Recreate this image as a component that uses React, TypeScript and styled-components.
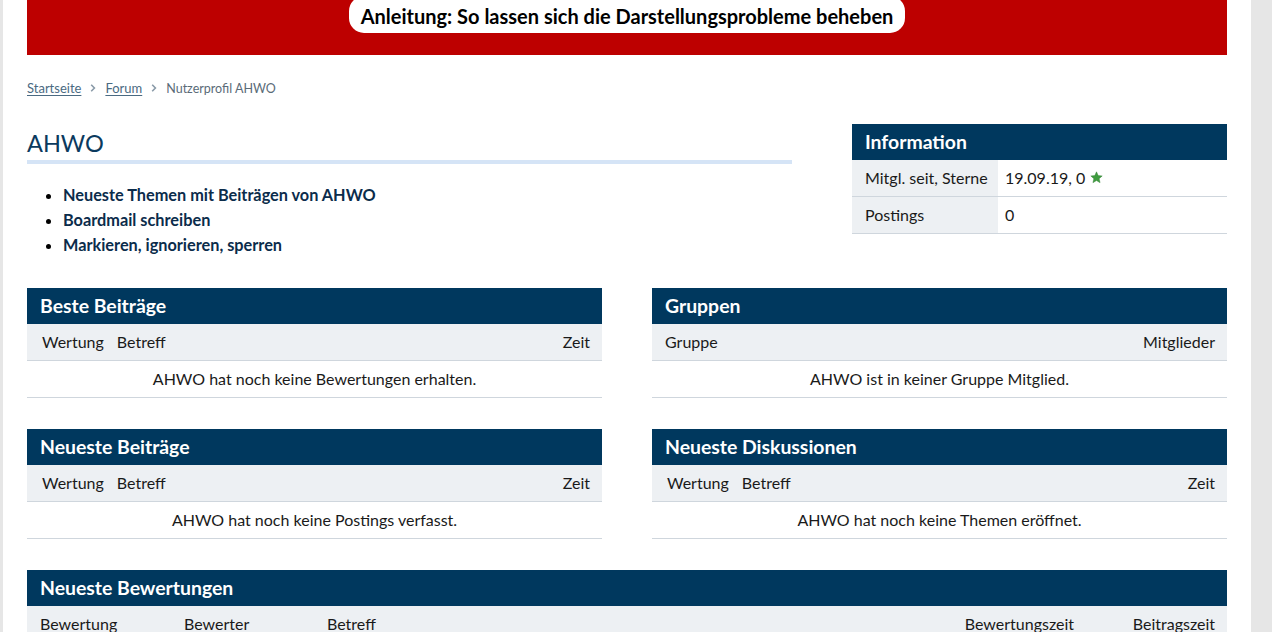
import React from "react";
import styled, { createGlobalStyle } from "styled-components";

const GlobalStyle = createGlobalStyle`
    html, body {
        margin: 0;
        padding: 0;
        background: #e6e6e6;
    }
    body {
        font-family: Lato, "Noto Sans", "Liberation Sans", sans-serif;
        font-size: 16px;
        color: #1a1a1a;
    }
`;

const NAVY = "#00385e";
const SUB_BG = "#edf0f3";
const LINE = "#cfd6dd";

interface Column {
    label: string;
    align?: "left" | "right";
}

interface Section {
    title: string;
    columns: Column[];
    template: string;
    empty?: string;
    padLeft?: number;
    gap?: number;
}

const sections: Section[] = [
    {
        title: "Beste Beiträge",
        columns: [{ label: "Wertung" }, { label: "Betreff" }, { label: "Zeit", align: "right" }],
        template: "auto 1fr auto",
        empty: "AHWO hat noch keine Bewertungen erhalten.",
        padLeft: 15,
    },
    {
        title: "Gruppen",
        columns: [{ label: "Gruppe" }, { label: "Mitglieder", align: "right" }],
        template: "1fr auto",
        empty: "AHWO ist in keiner Gruppe Mitglied.",
        padLeft: 13,
    },
    {
        title: "Neueste Beiträge",
        columns: [{ label: "Wertung" }, { label: "Betreff" }, { label: "Zeit", align: "right" }],
        template: "auto 1fr auto",
        empty: "AHWO hat noch keine Postings verfasst.",
        padLeft: 15,
    },
    {
        title: "Neueste Diskussionen",
        columns: [{ label: "Wertung" }, { label: "Betreff" }, { label: "Zeit", align: "right" }],
        template: "auto 1fr auto",
        empty: "AHWO hat noch keine Themen eröffnet.",
        padLeft: 15,
    },
];

const ratings: Section = {
    title: "Neueste Bewertungen",
    columns: [
        { label: "Bewertung" },
        { label: "Bewerter" },
        { label: "Betreff" },
        { label: "Bewertungszeit" },
        { label: "Beitragszeit", align: "right" },
    ],
    template: "144px 143px 1fr 168px auto",
    padLeft: 13,
    gap: 0,
};

const Chevron = () => (
    <svg viewBox="0 0 6 8" width="6" height="8">
        <path d="M1.2 0.8 L4.4 4 L1.2 7.2" fill="none" stroke="#8a9aa8" strokeWidth="1.6" />
    </svg>
);

const Star = () => (
    <StarIcon viewBox="0 0 24 24" width="13" height="13">
        <path
            d="M12 1.5l3.1 6.9 7.4.7-5.6 5 1.7 7.4L12 17.7l-6.6 3.8 1.7-7.4-5.6-5 7.4-.7z"
            fill="#3f9c3f"
            stroke="#2e7d32"
            strokeWidth="0.8"
        />
    </StarIcon>
);

const DataTable = ({ section, empty }: { section: Section; empty?: string }) => (
    <Table>
        <TableHead>{section.title}</TableHead>
        <HeadRow $template={section.template} $padLeft={section.padLeft ?? 13} $gap={section.gap ?? 13}>
            {section.columns.map((c) => (
                <HeadCell key={c.label} $align={c.align ?? "left"}>
                    {c.label}
                </HeadCell>
            ))}
        </HeadRow>
        {empty && <EmptyRow>{empty}</EmptyRow>}
    </Table>
);

export default function App() {
    return (
        <>
            <GlobalStyle />
            <Page>
                <Banner>
                    <BannerPill href="#">Anleitung: So lassen sich die Darstellungsprobleme beheben</BannerPill>
                </Banner>

                <Breadcrumb>
                    <Crumb href="#">Startseite</Crumb>
                    <Chevron />
                    <Crumb href="#">Forum</Crumb>
                    <Chevron />
                    <CurrentCrumb>Nutzerprofil AHWO</CurrentCrumb>
                </Breadcrumb>

                <TopRow>
                    <ProfileCol>
                        <Title>AHWO</Title>
                        <LinkList>
                            <li>
                                <ProfileLink href="#">Neueste Themen mit Beiträgen von AHWO</ProfileLink>
                            </li>
                            <li>
                                <ProfileLink href="#">Boardmail schreiben</ProfileLink>
                            </li>
                            <li>
                                <ProfileLink href="#">Markieren, ignorieren, sperren</ProfileLink>
                            </li>
                        </LinkList>
                    </ProfileCol>

                    <InfoBox>
                        <TableHead>Information</TableHead>
                        <InfoRow>
                            <InfoLabel>Mitgl. seit, Sterne</InfoLabel>
                            <InfoValue>
                                19.09.19, 0 <Star />
                            </InfoValue>
                        </InfoRow>
                        <InfoRow>
                            <InfoLabel>Postings</InfoLabel>
                            <InfoValue>0</InfoValue>
                        </InfoRow>
                    </InfoBox>
                </TopRow>

                <TableGrid>
                    {sections.map((s) => (
                        <DataTable key={s.title} section={s} empty={s.empty} />
                    ))}
                </TableGrid>

                <WideTable>
                    <DataTable section={ratings} />
                </WideTable>
            </Page>
        </>
    );
}

const Page = styled.div`
    margin-left: 3px;
    width: 1248px;
    min-height: 632px;
    box-sizing: border-box;
    padding: 0 24px 40px;
    background: #fff;
`;

const Banner = styled.div`
    height: 55px;
    background: #bd0000;
    display: flex;
    justify-content: center;
    align-items: flex-start;
    overflow: hidden;
`;

const BannerPill = styled.a`
    margin-top: -4px;
    height: 37px;
    line-height: 41px;
    padding: 0 12px;
    border-radius: 15px;
    background: #fff;
    color: #000;
    font-size: 20px;
    font-weight: 700;
    text-decoration: none;
    white-space: nowrap;
`;

const Breadcrumb = styled.nav`
    margin-top: 23px;
    height: 20px;
    display: flex;
    align-items: center;
    gap: 9px;
    font-size: 13px;
`;

const Crumb = styled.a`
    color: #4a6a82;
    text-decoration: underline;
    text-underline-offset: 2px;
`;

const CurrentCrumb = styled.span`
    color: #5a6b78;
    font-size: 12.5px;
`;

const TopRow = styled.div`
    margin-top: 26px;
    display: flex;
    gap: 60px;
    align-items: flex-start;
`;

const ProfileCol = styled.div`
    flex: 1;
`;

const Title = styled.h1`
    margin: 0;
    height: 36px;
    line-height: 38px;
    font-size: 23.5px;
    font-weight: 400;
    color: #0b3a5e;
    border-bottom: 4px solid #d5e4f6;
`;

const LinkList = styled.ul`
    margin: 18px 0 0;
    padding-left: 36px;
    color: #000;

    li {
        line-height: 25px;
    }
`;

const ProfileLink = styled.a`
    color: #0b2c4b;
    font-weight: 700;
    font-size: 16.3px;
    text-decoration: none;
`;

const InfoBox = styled.div`
    width: 375px;
`;

const TableHead = styled.div`
    height: 36px;
    line-height: 36px;
    padding: 0 13px;
    background: ${NAVY};
    color: #fff;
    font-size: 19.4px;
    font-weight: 700;
`;

const InfoRow = styled.div`
    display: grid;
    grid-template-columns: 146px 1fr;
    height: 37px;
    box-sizing: border-box;
    border-bottom: 1px solid ${LINE};
`;

const InfoLabel = styled.div`
    background: ${SUB_BG};
    padding: 0 13px;
    line-height: 36px;
    white-space: nowrap;
`;

const InfoValue = styled.div`
    padding: 0 7px;
    line-height: 36px;
    display: flex;
    align-items: center;
    gap: 5px;
`;

const StarIcon = styled.svg`
    margin-top: -1px;
`;

const TableGrid = styled.div`
    margin-top: 31px;
    display: grid;
    grid-template-columns: 1fr 1fr;
    column-gap: 50px;
    row-gap: 31px;
`;

const WideTable = styled.div`
    margin-top: 31px;
`;

const Table = styled.div`
    width: 100%;
`;

const HeadRow = styled.div<{ $template: string; $padLeft: number; $gap: number }>`
    display: grid;
    grid-template-columns: ${(p) => p.$template};
    column-gap: ${(p) => p.$gap}px;
    height: 37px;
    box-sizing: border-box;
    padding: 0 12px 0 ${(p) => p.$padLeft}px;
    background: ${SUB_BG};
    border-bottom: 1px solid ${LINE};
    line-height: 36px;
`;

const HeadCell = styled.div<{ $align: "left" | "right" }>`
    text-align: ${(p) => p.$align};
    white-space: nowrap;
`;

const EmptyRow = styled.div`
    height: 37px;
    box-sizing: border-box;
    line-height: 36px;
    text-align: center;
    border-bottom: 1px solid ${LINE};
`;
